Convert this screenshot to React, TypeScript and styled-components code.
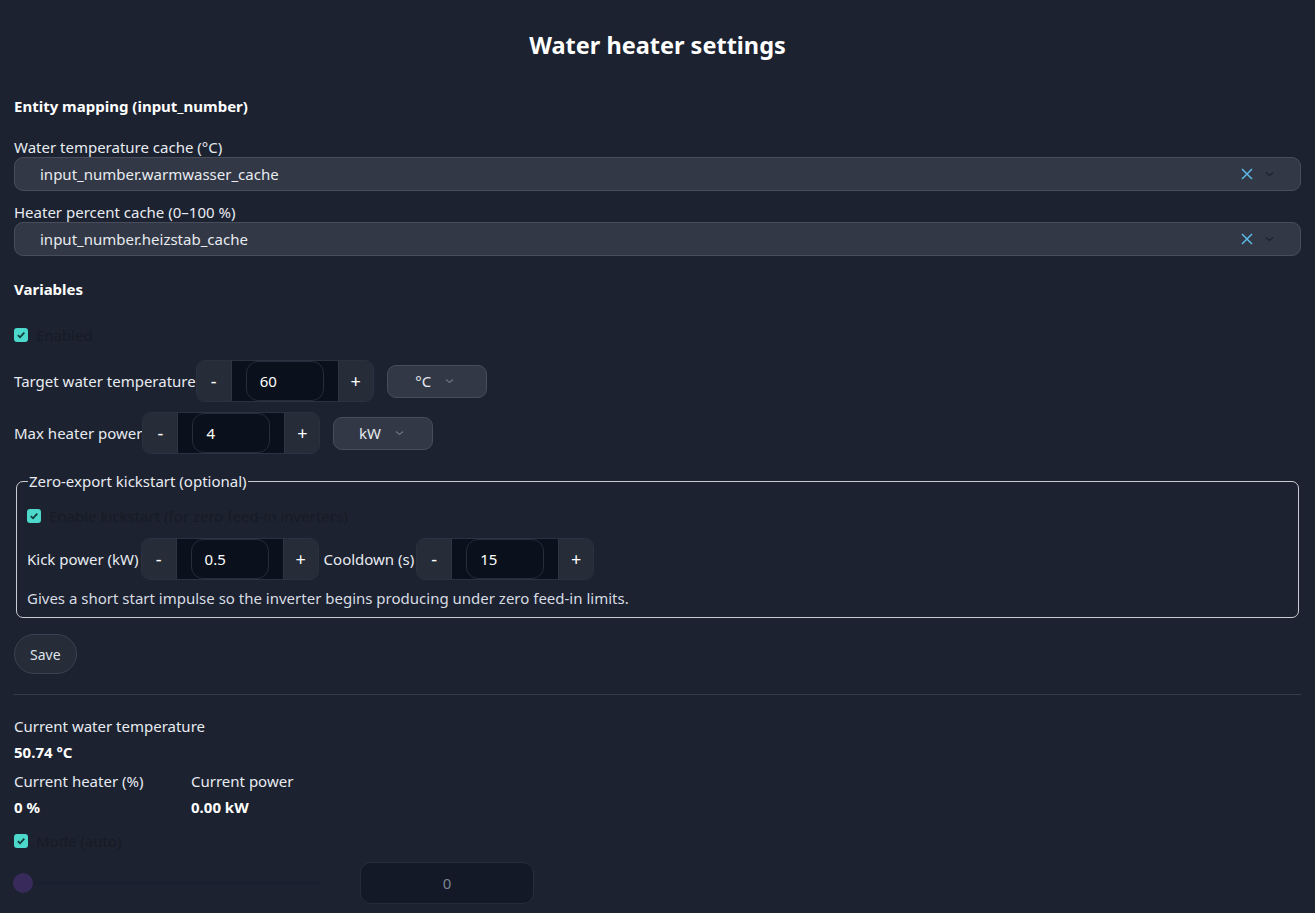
import React, { useState } from "react";
import styled, { createGlobalStyle } from "styled-components";

const GlobalStyle = createGlobalStyle`
  html, body {
    margin: 0;
    padding: 0;
    background: #1c2230;
  }
  body {
    font-family: "Noto Sans", "Open Sans", sans-serif;
    font-size: 15px;
    color: #e8ebf0;
  }
  * { box-sizing: border-box; }
`;

const Page = styled.main`
  padding: 29px 14px 10px;
  display: flex;
  flex-direction: column;
`;

const Title = styled.h1`
  margin: 0 0 35px;
  text-align: center;
  font-size: 23.5px;
  font-weight: 700;
  color: #ffffff;
`;

const SectionTitle = styled.h3<{ $mt?: number }>`
  margin: ${(p) => p.$mt ?? 0}px 0 21px;
  font-size: 15px;
  font-weight: 700;
  color: #ffffff;
`;

const FieldLabel = styled.div`
  font-size: 15px;
  line-height: 20px;
`;

const EntityField = styled.div`
  margin-bottom: 11px;
  &:last-of-type {
    margin-bottom: 12px;
  }
`;

const SelectBox = styled.div`
  height: 34px;
  display: flex;
  align-items: center;
  padding: 0 26px 0 25px;
  background: #323845;
  border: 1px solid #474d5a;
  border-radius: 9px;
  font-size: 15px;
`;

const SelectValue = styled.span`
  flex: 1;
`;

const ClearIcon = styled.svg`
  width: 14px;
  height: 14px;
  margin-right: 11px;
`;

const Chevron = styled.svg<{ $light?: boolean }>`
  width: 9px;
  height: 6px;
  stroke: ${(p) => (p.$light ? "#6b7280" : "#1c2230")};
`;

const CheckRow = styled.label<{ $gap?: number; $mb?: number }>`
  display: flex;
  align-items: center;
  gap: 8px;
  height: 20px;
  margin: ${(p) => p.$gap ?? 0}px 0 ${(p) => p.$mb ?? 12}px;
  color: #161b24;
  font-size: 15px;
`;

const CheckBox = styled.span`
  width: 14px;
  height: 14px;
  border-radius: 3px;
  background: #4dd8cc;
  display: flex;
  align-items: center;
  justify-content: center;
`;

const Row = styled.div<{ $mb?: number }>`
  display: flex;
  align-items: center;
  margin-bottom: ${(p) => p.$mb ?? 10}px;
`;

const Stepper = styled.div`
  display: flex;
  height: 42px;
  border: 1px solid #2b3140;
  border-radius: 9px;
  overflow: hidden;
  background: #252b37;
`;

const StepButton = styled.button`
  width: 34px;
  border: none;
  background: #262c38;
  color: #ffffff;
  font-family: inherit;
  font-size: 18px;
  padding: 0;
`;

const StepWell = styled.div`
  background: #0b111c;
  display: flex;
  align-items: center;
  padding: 0 14px 0 14px;
  border-left: 1px solid #2f3542;
  border-right: 1px solid #2f3542;
`;

const StepInput = styled.div<{ $w: number }>`
  width: ${(p) => p.$w}px;
  height: 40px;
  border: 1px solid #262d3b;
  border-radius: 12px;
  display: flex;
  align-items: center;
  padding-left: 13px;
  font-size: 15px;
  color: #ffffff;
  background: #0b111c;
`;

const UnitSelect = styled.div<{ $w: number }>`
  width: ${(p) => p.$w}px;
  height: 33px;
  margin-left: 13px;
  display: flex;
  align-items: center;
  justify-content: center;
  gap: 14px;
  background: #323845;
  border: 1px solid #474d5a;
  border-radius: 9px;
  font-size: 15px;
  padding-right: 4px;
`;

const Fieldset = styled.fieldset`
  margin: 17px 2px 16px;
  border: 1px solid #c9ccd2;
  border-radius: 7px;
  padding: 4px 10px 9px;
`;

const Legend = styled.legend`
  padding: 0 1px;
  margin-left: 1px;
  font-size: 15px;
`;

const InlineLabel = styled.span<{ $ml?: number }>`
  margin-left: ${(p) => p.$ml ?? 0}px;
  margin-right: 2px;
`;

const RowLabel = styled.span`
  margin-right: 2px;
`;

const Help = styled.div`
  font-size: 15px;
  color: #d8dce3;
`;

const SaveButton = styled.button`
  align-self: flex-start;
  height: 40px;
  padding: 0 15px;
  border-radius: 20px;
  border: 1px solid #3b4150;
  background: #262c38;
  color: #dfe3ea;
  font-family: inherit;
  font-size: 14px;
`;

const Divider = styled.hr`
  width: 100%;
  border: none;
  border-top: 1px solid #373d49;
  margin: 20px 0 20px;
`;

const StatLabel = styled.div`
  font-size: 15px;
  line-height: 22px;
`;

const StatValue = styled.div`
  font-weight: 700;
  font-size: 15px;
  line-height: 22px;
  color: #ffffff;
  margin: 4px 0 7px;
`;

const StatGrid = styled.div`
  display: grid;
  grid-template-columns: 177px auto;
  justify-content: start;
`;

const SliderRow = styled.div`
  display: flex;
  align-items: center;
`;

const Track = styled.div`
  width: 307px;
  height: 4px;
  background: #1b2030;
  border-radius: 2px;
  position: relative;
  margin-left: -1px;
`;

const Thumb = styled.span`
  position: absolute;
  left: 0;
  top: -8px;
  width: 20px;
  height: 20px;
  border-radius: 50%;
  background: #382b5b;
`;

const NumberBox = styled.div`
  margin-left: 40px;
  width: 174px;
  height: 42px;
  border: 1px solid #262c3b;
  border-radius: 11px;
  background: #131926;
  display: flex;
  align-items: center;
  justify-content: center;
  color: #7d8491;
  font-size: 15px;
`;

const ChevronIcon = ({ light }: { light?: boolean }) => (
  <Chevron $light={light} viewBox="0 0 9 6" fill="none" strokeWidth="1.2">
    <path d="M1 1.5 4.5 4.5 8 1.5" />
  </Chevron>
);

const Check = () => (
  <CheckBox>
    <svg width="10" height="10" viewBox="0 0 10 10" fill="none">
      <path d="M1.8 5.2 4 7.3 8.3 2.6" stroke="#123b3a" strokeWidth="1.8" />
    </svg>
  </CheckBox>
);

const EntitySelect = ({ label, value }: { label: string; value: string }) => (
  <EntityField>
    <FieldLabel>{label}</FieldLabel>
    <SelectBox>
      <SelectValue>{value}</SelectValue>
      <ClearIcon viewBox="0 0 14 14" fill="none" stroke="#5db8e6" strokeWidth="1.5">
        <path d="M2 2 12 12M12 2 2 12" />
      </ClearIcon>
      <ChevronIcon />
    </SelectBox>
  </EntityField>
);

const NumberStepper = ({ value }: { value: string }) => (
  <Stepper>
    <StepButton>-</StepButton>
    <StepWell>
      <StepInput $w={78}>{value}</StepInput>
    </StepWell>
    <StepButton>+</StepButton>
  </Stepper>
);

const App = () => {
  const [enabled] = useState(true);
  return (
    <>
      <GlobalStyle />
      <Page>
        <Title>Water heater settings</Title>
        <SectionTitle>Entity mapping (input_number)</SectionTitle>
        <EntitySelect label="Water temperature cache (°C)" value="input_number.warmwasser_cache" />
        <EntitySelect label="Heater percent cache (0–100 %)" value="input_number.heizstab_cache" />

        <SectionTitle $mt={12}>Variables</SectionTitle>
        {enabled && (
          <CheckRow $gap={5} $mb={15}>
            <Check />
            Enabled
          </CheckRow>
        )}
        <Row>
          <span>Target water temperature</span>
          <NumberStepper value="60" />
          <UnitSelect $w={100}>
            °C <ChevronIcon light />
          </UnitSelect>
        </Row>
        <Row $mb={0}>
          <span>Max heater power</span>
          <NumberStepper value="4" />
          <UnitSelect $w={100}>
            kW <ChevronIcon light />
          </UnitSelect>
        </Row>

        <Fieldset>
          <Legend>Zero-export kickstart (optional)</Legend>
          <CheckRow $gap={11}>
            <Check />
            Enable kickstart (for zero feed-in inverters)
          </CheckRow>
          <Row $mb={8}>
            <RowLabel>Kick power (kW)</RowLabel>
            <NumberStepper value="0.5" />
            <InlineLabel $ml={5}>Cooldown (s)</InlineLabel>
            <NumberStepper value="15" />
          </Row>
          <Help>Gives a short start impulse so the inverter begins producing under zero feed-in limits.</Help>
        </Fieldset>

        <SaveButton>Save</SaveButton>
        <Divider />

        <StatLabel>Current water temperature</StatLabel>
        <StatValue>50.74 °C</StatValue>
        <StatGrid>
          <div>
            <StatLabel>Current heater (%)</StatLabel>
            <StatValue>0 %</StatValue>
          </div>
          <div>
            <StatLabel>Current power</StatLabel>
            <StatValue>0.00 kW</StatValue>
          </div>
        </StatGrid>
        <CheckRow $gap={6} $mb={11}>
          <Check />
          Mode (auto)
        </CheckRow>
        <SliderRow>
          <Track>
            <Thumb />
          </Track>
          <NumberBox>0</NumberBox>
        </SliderRow>
      </Page>
    </>
  );
};

export default App;
